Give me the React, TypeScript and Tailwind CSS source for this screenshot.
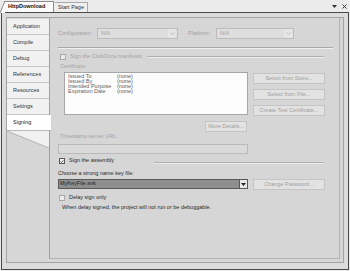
import React from "react";

function Check({ checked }: { checked?: boolean }) {
  return (
    <div className={"w-[6px] h-[6px] border flex items-center justify-center " + (checked ? "border-[#5a5a5a] bg-[#f4f4f4]" : "border-[#a8a8a8] bg-[#ececec]")}>
      {checked && (
        <svg width="5" height="5" viewBox="0 0 5 5">
          <path d="M0.7 2.4 L2 3.7 L4.3 1" stroke="#222" strokeWidth="0.9" fill="none" />
        </svg>
      )}
    </div>
  );
}

function Combo({ text, w }: { text: string; w: string }) {
  return (
    <div className={"h-[11px] border border-[#bcbcbc] bg-[#dedede] flex items-center " + w}>
      <span className="pl-[3px] flex-1 text-[#a2a2a2]">{text}</span>
      <div className="w-[8px] h-[9px] mr-[1px] bg-[#e6e6e6] flex items-center justify-center">
        <svg width="5" height="3" viewBox="0 0 5 3">
          <path d="M0.5 0.5 L2.5 2.5 L4.5 0.5" stroke="#b0b0b0" strokeWidth="0.8" fill="none" />
        </svg>
      </div>
    </div>
  );
}

function Btn({ label, cls }: { label: string; cls?: string }) {
  return (
    <div className={"h-[11px] border border-[#c4c4c4] bg-[#e2e2e2] flex items-center justify-center text-[#a0a0a0] " + (cls || "")}>
      {label}
    </div>
  );
}

export default function App() {
  const nav = ["Application", "Compile", "Debug", "References", "Resources", "Settings"];
  return (
    <div className="w-[350px] h-[271px] bg-[#ebebeb] flex flex-col font-['Liberation_Sans',sans-serif] text-[5.5px] leading-none text-[#3c3c3c] overflow-hidden">
      {/* tab strip */}
      <div className="h-[12px] flex items-end relative">
        <div className="relative ml-[4px] h-[11px] w-[50px] bg-[#fbfbfb] border-t border-r border-[#8a8a8a] flex items-center">
          <svg className="absolute left-[-4px] top-[-1px]" width="5" height="12" viewBox="0 0 5 12">
            <path d="M0 12 L5 0 L5 12 Z" fill="#fbfbfb" />
            <path d="M0 12 L5 0" stroke="#8a8a8a" strokeWidth="1" />
          </svg>
          <span className="pl-[4px] font-bold text-[#111]">HttpDownload</span>
        </div>
        <div className="h-[10px] w-[33px] ml-[1px] bg-[#efefef] border-t border-r border-[#a8a8a8] flex items-center">
          <span className="pl-[3px] text-[#333]">Start Page</span>
        </div>
        <div className="flex-1" />
        <div className="absolute right-[3px] top-[4px] flex items-center gap-[5px]">
          <svg width="5" height="3" viewBox="0 0 5 3"><path d="M0 0 L5 0 L2.5 3 Z" fill="#333" /></svg>
          <svg width="5" height="5" viewBox="0 0 5 5"><path d="M0.5 0.5 L4.5 4.5 M4.5 0.5 L0.5 4.5" stroke="#333" strokeWidth="1" /></svg>
        </div>
      </div>
      {/* frame */}
      <div className="flex-1 mx-[1px] mb-[1px] border border-[#4a4a4a] bg-[#dcdcdc] pt-[4px] pl-[4px] pr-[4px] pb-[6px] flex">
        <div className="flex-1 flex border border-[#a4a4a4] bg-[#d6d6d6]">
          {/* nav */}
          <div className="w-[42px] flex flex-col pt-[1px]">
            {nav.map((n) => (
              <div key={n} className="h-[16px] bg-[#f1f1f1] border-b border-[#c6c6c6] flex items-center pl-[6px] text-[#333]">
                {n}
              </div>
            ))}
            <div className="h-[16px] bg-[#ffffff] border-b border-[#b8b8b8] flex items-center pl-[6px] text-[#222] w-[44px] relative z-10">
              Signing
            </div>
            <svg width="42" height="17" viewBox="0 0 42 17">
              <path d="M0 0 L42 0 L42 17 Z" fill="#f1f1f1" />
              <path d="M0 0 L42 17" stroke="#b4b4b4" strokeWidth="1" />
            </svg>
          </div>
          {/* content */}
          <div className="flex-1 border-l border-[#a0a0a0] border-r border-b border-r-[#b4b4b4] border-b-[#b4b4b4] mr-[3px] mb-[3px] flex flex-col">
            {/* config row */}
            <div className="mt-[10px] ml-[8px] flex items-center h-[11px]">
              <span className="w-[39px] text-[#a0a0a0]">Configuration:</span>
              <Combo text="N/A" w="w-[81px]" />
              <span className="ml-[10px] w-[28px] text-[#a0a0a0]">Platform:</span>
              <Combo text="N/A" w="w-[78px]" />
            </div>
            <div className="mt-[8px] ml-[8px] w-[275px] h-[2px] border-t border-[#a8a8a8] border-b border-b-[#f0f0f0]" />
            {/* clickonce */}
            <div className="mt-[4px] ml-[10px] mr-[15px] h-[8px] flex items-center">
              <Check />
              <span className="ml-[4px] text-[#a4a4a4]">Sign the ClickOnce manifests</span>
              <div className="flex-1 ml-[5px] h-[2px] border-t border-[#b0b0b0] border-b border-b-[#ececec]" />
            </div>
            <div className="mt-[3px] ml-[10px] h-[6px] flex items-center text-[#a4a4a4]">Certificate:</div>
            <div className="mt-[2px] flex">
              <div className="ml-[14px] w-[184px] h-[43px] border border-[#a6a6a6] bg-[#fcfcfc] pl-[3px] pt-[1px] text-[#5e5e5e]">
                {[
                  ["Issued To", "(none)"],
                  ["Issued By", "(none)"],
                  ["Intended Purpose", "(none)"],
                  ["Expiration Date", "(none)"],
                ].map(([a, b]) => (
                  <div key={a} className="flex h-[5px] items-center">
                    <span className="w-[49px]">{a}</span>
                    <span>{b}</span>
                  </div>
                ))}
              </div>
              <div className="ml-[5px] w-[72px] flex flex-col gap-[5px] pt-[1px]">
                <Btn label="Select from Store..." />
                <Btn label="Select from File..." />
                <Btn label="Create Test Certificate..." />
              </div>
            </div>
            <div className="mt-[5px] ml-[155px]">
              <Btn label="More Details..." cls="w-[42px] h-[10px]" />
            </div>
            <div className="mt-[2px] ml-[10px] h-[6px] flex items-center text-[#a4a4a4]">Timestamp server URL:</div>
            <div className="mt-[4px] ml-[8px] w-[190px] h-[10px] border border-[#bababa] bg-[#dadada]" />
            {/* sign assembly */}
            <div className="mt-[3px] ml-[9px] mr-[15px] h-[8px] flex items-center">
              <Check checked />
              <span className="ml-[4px] text-[#2a2a2a]">Sign the assembly</span>
              <div className="flex-1 ml-[40px] mt-[3px] h-[2px] border-t border-[#b0b0b0] border-b border-b-[#ececec]" />
            </div>
            <div className="mt-[6px] ml-[8px] h-[6px] flex items-center text-[#2a2a2a]">Choose a strong name key file:</div>
            <div className="mt-[2px] ml-[8px] flex">
              <div className="w-[190px] h-[10px] border border-[#5a5a5a] bg-[#8e8e8e] flex items-center">
                <span className="pl-[1px] flex-1 text-[#1e1e1e]">MyKeyFile.snk</span>
                <div className="w-[8px] h-[8px] mr-[0px] bg-[#e8e8e8] border-l border-[#5a5a5a] flex items-center justify-center">
                  <svg width="5" height="3" viewBox="0 0 5 3"><path d="M0 0 L5 0 L2.5 3 Z" fill="#222" /></svg>
                </div>
              </div>
              <Btn label="Change Password..." cls="ml-[5px] w-[72px] h-[10px]" />
            </div>
            <div className="mt-[4px] ml-[9px] h-[8px] flex items-center">
              <Check />
              <span className="ml-[4px] text-[#2a2a2a]">Delay sign only</span>
            </div>
            <div className="mt-[3px] ml-[12px] h-[6px] flex items-center text-[#2a2a2a]">
              When delay signed, the project will not run or be debuggable.
            </div>
          </div>
        </div>
      </div>
    </div>
  );
}
